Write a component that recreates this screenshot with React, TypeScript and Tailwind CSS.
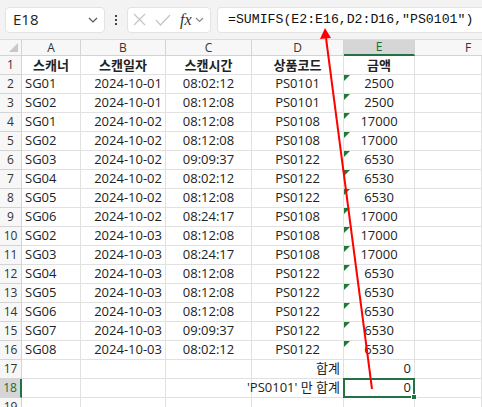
import React from "react"

const rows: [string, string, string, string, string][] = [
  ["SG01", "2024-10-01", "08:02:12", "PS0101", "2500"],
  ["SG02", "2024-10-01", "08:12:08", "PS0101", "2500"],
  ["SG01", "2024-10-02", "08:12:08", "PS0108", "17000"],
  ["SG02", "2024-10-02", "08:12:08", "PS0108", "17000"],
  ["SG03", "2024-10-02", "09:09:37", "PS0122", "6530"],
  ["SG04", "2024-10-02", "08:02:12", "PS0122", "6530"],
  ["SG05", "2024-10-02", "08:12:08", "PS0122", "6530"],
  ["SG06", "2024-10-02", "08:24:17", "PS0108", "17000"],
  ["SG02", "2024-10-03", "08:12:08", "PS0108", "17000"],
  ["SG03", "2024-10-03", "08:24:17", "PS0108", "17000"],
  ["SG04", "2024-10-03", "08:12:08", "PS0122", "6530"],
  ["SG05", "2024-10-03", "08:12:08", "PS0122", "6530"],
  ["SG06", "2024-10-03", "08:12:08", "PS0122", "6530"],
  ["SG07", "2024-10-03", "09:09:37", "PS0122", "6530"],
  ["SG08", "2024-10-03", "08:02:12", "PS0122", "6530"],
]

const cell = "h-[19px] border-r border-b border-[#e1e1e1] flex items-center px-[3px] whitespace-nowrap text-[13px] text-[#222]"
const rowHead = "h-[19px] border-r border-b border-[#d4d4d4] bg-[#f7f7f7] flex items-center justify-center text-[12px] text-[#333]"

function Triangle() {
  return <div className="absolute left-0 top-0 w-0 h-0 border-t-[6px] border-r-[6px] border-t-[#1f7a36] border-r-transparent" />
}

export default function App() {
  return (
    <div className="relative w-[482px] h-[407px] overflow-hidden bg-white font-['Open_Sans','Noto_Sans_CJK_KR',sans-serif]">
      {/* formula bar */}
      <div className="h-[40px] bg-[#f3f3f3] flex items-center gap-[6px] pl-[5px] border-b border-[#dcdcdc]">
        <div className="w-[100px] h-[26px] bg-white rounded-[4px] border border-[#e3e3e3] flex items-center pl-[7px] pr-[6px] justify-between">
          <span className="text-[15px] text-[#222]">E18</span>
          <svg width="10" height="6" viewBox="0 0 10 6" fill="none" stroke="#555" strokeWidth="1.2"><path d="M1 1l4 4 4-4" /></svg>
        </div>
        <div className="w-[10px] flex flex-col items-center gap-[2px]">
          <div className="w-[2px] h-[2px] bg-[#444]" />
          <div className="w-[2px] h-[2px] bg-[#444]" />
          <div className="w-[2px] h-[2px] bg-[#444]" />
        </div>
        <div className="w-[84px] h-[26px] bg-white rounded-[4px] border border-[#e3e3e3] flex items-center pl-[5px] gap-[9px]">
          <svg width="13" height="13" viewBox="0 0 13 13" stroke="#c4c4c4" strokeWidth="1.2"><path d="M1 1l11 11M12 1L1 12" /></svg>
          <svg width="16" height="12" viewBox="0 0 16 12" fill="none" stroke="#c4c4c4" strokeWidth="1.2"><path d="M1 6l4.5 5L15 1" /></svg>
          <div className="flex items-center gap-[3px]">
            <span className="font-['Liberation_Serif',serif] italic text-[16px] text-[#333] leading-none">fx</span>
            <svg width="9" height="6" viewBox="0 0 9 6" fill="none" stroke="#888" strokeWidth="1.1"><path d="M1 1l3.5 3.5L8 1" /></svg>
          </div>
        </div>
        <div className="flex-1 h-[26px] bg-white rounded-l-[4px] border border-r-0 border-[#e3e3e3] flex items-center pl-[10px]">
          <span className="font-['Liberation_Mono',monospace] text-[13.2px] text-[#111] whitespace-nowrap">=SUMIFS(E2:E16,D2:D16,"PS0101")</span>
        </div>
      </div>

      {/* sheet */}
      <div className="grid grid-cols-[22px_59px_85px_86px_92px_71px_1fr]">
        <div className="h-[16px] bg-[#f7f7f7] border-r border-b border-[#d4d4d4] relative">
          <div className="absolute right-[3px] bottom-[3px] w-0 h-0 border-b-[9px] border-l-[9px] border-b-[#c8c8c8] border-l-transparent" />
        </div>
        {["A", "B", "C", "D"].map(c => (
          <div key={c} className="h-[16px] bg-[#f7f7f7] border-r border-b border-[#d4d4d4] flex items-center justify-center text-[12px] text-[#333]">{c}</div>
        ))}
        <div className="h-[16px] bg-[#d6d6d6] border-r border-[#d4d4d4] border-b-2 border-b-[#217346] flex items-center justify-center text-[12px] text-[#1b6a3a]">E</div>
        <div className="h-[16px] bg-[#f7f7f7] border-b border-[#d4d4d4] flex items-center justify-start text-[12px] text-[#333] pl-[50px]">F</div>

        {/* row 1 */}
        <div className={rowHead}>1</div>
        {["스캐너", "스캔일자", "스캔시간", "상품코드", "금액"].map(h => (
          <div key={h} className={`${cell} justify-center font-bold font-['Noto_Sans_CJK_KR',sans-serif] text-[13px]`}>{h}</div>
        ))}
        <div className={cell} />

        {rows.map((r, i) => (
          <React.Fragment key={i}>
            <div className={rowHead}>{i + 2}</div>
            <div className={cell}>{r[0]}</div>
            <div className={`${cell} justify-end`}>{r[1]}</div>
            <div className={`${cell} justify-center`}>{r[2]}</div>
            <div className={`${cell} justify-center`}>{r[3]}</div>
            <div className={`${cell} justify-center relative`}><Triangle />{r[4]}</div>
            <div className={cell} />
          </React.Fragment>
        ))}

        {/* row 17 */}
        <div className={rowHead}>17</div>
        <div className={cell} />
        <div className={cell} />
        <div className={cell} />
        <div className={`${cell} justify-end`}>합계</div>
        <div className={`${cell} justify-end`}>0</div>
        <div className={cell} />

        {/* row 18 */}
        <div className="h-[19px] border-r-2 border-r-[#217346] border-b border-[#d4d4d4] bg-[#d6d6d6] flex items-center justify-center text-[12px] text-[#1b6a3a]">18</div>
        <div className={cell} />
        <div className={cell} />
        <div className={cell} />
        <div className={`${cell} justify-end overflow-visible`}>'PS0101' 만 합계</div>
        <div className={`${cell} justify-end relative`}>
          <div className="absolute -left-[1px] -top-[1px] -right-[1px] -bottom-[1px] border-2 border-[#217346]" />
          <div className="absolute -right-[3px] -bottom-[3px] w-[6px] h-[6px] bg-[#217346] border border-white" />
          0
        </div>
        <div className={cell} />

        {/* row 19 */}
        <div className={rowHead}>19</div>
        <div className={cell} />
        <div className={cell} />
        <div className={cell} />
        <div className={cell} />
        <div className={cell} />
        <div className={cell} />
      </div>

      {/* annotation arrow */}
      <svg className="absolute inset-0 pointer-events-none" width="482" height="407">
        <line x1="372" y1="389" x2="326" y2="38" stroke="#ff0000" strokeWidth="2" />
        <polygon points="325,28 320,39 331,38" fill="#ff0000" />
      </svg>
    </div>
  )
}
